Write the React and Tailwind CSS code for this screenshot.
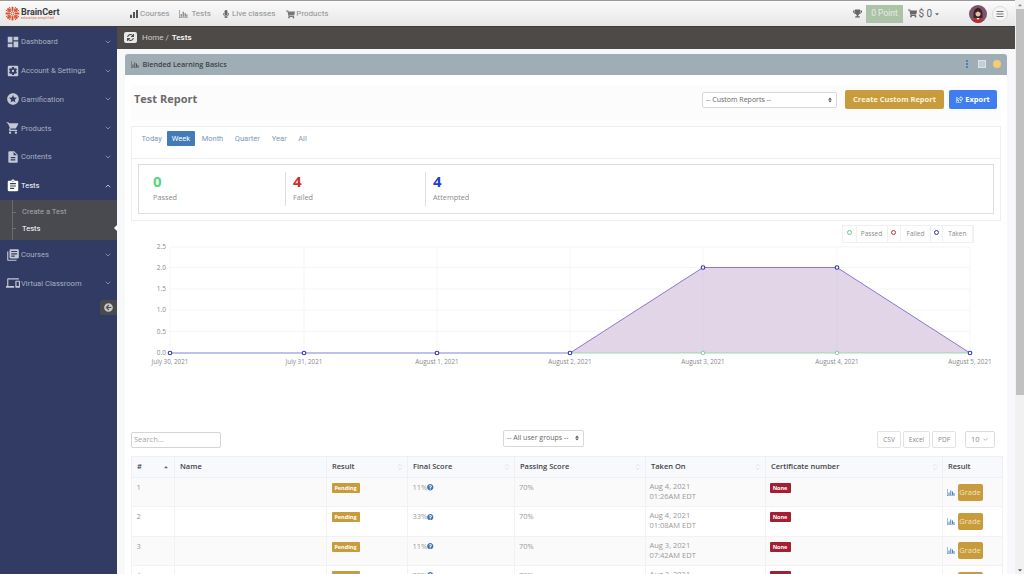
import { ChevronDown, ChevronUp, ChevronsUpDown } from "lucide-react"
import {
  FaMicrophone,
  FaShoppingCart,
  FaTrophy,
  FaSync,
  FaRegShareSquare,
  FaQuestionCircle,
  FaArrowCircleLeft,
  FaBars,
  FaCaretDown,
  FaCaretUp,
  FaSort,
} from "react-icons/fa"
import {
  MdDashboard,
  MdSettingsApplications,
  MdStars,
  MdShoppingCart,
  MdDescription,
  MdAssignment,
  MdLibraryBooks,
  MdDevices,
} from "react-icons/md"

const BarChartIcon = ({ className }) => (
  <svg viewBox="0 0 16 14" className={className} fill="currentColor">
    <path d="M0 0h1v13h15v1H0z" />
    <path d="M3 7h2v5H3zM6.500 3h2v9h-2zM10 5h2v7h-2zM13 8h2v4h-2z" />
  </svg>
)

const SignalIcon = ({ className }) => (
  <svg viewBox="0 0 12 12" className={className} fill="currentColor">
    <path d="M0 7h3v5H0zM4.500 3h3v9h-3zM9 0h3v12H9z" />
  </svg>
)

const Logo = () => (
  <svg viewBox="0 0 24 24" className="w-[15px] h-[15px] text-[#d9522f]" fill="none" stroke="currentColor">
    <path d="M12 1v7M12 16v7M1 12h7M16 12h7M4 4l5 5M15 15l5 5M20 4l-5 5M9 15l-5 5" strokeWidth="3" />
    <path d="M7 1.500l2 5M17 1.500l-2 5M7 22.500l2-5M17 22.500l-2-5M1.500 7l5 2M1.500 17l5-2M22.500 7l-5 2M22.500 17l-5-2" strokeWidth="1.600" />
    <circle cx="12" cy="12" r="2.500" strokeWidth="1.600" />
  </svg>
)

const Avatar = () => (
  <svg viewBox="0 0 36 36" className="w-[18px] h-[18px] rounded-full">
    <rect width="36" height="36" fill="#7a5468" />
    <path d="M9 20c0-10 4-14 9-14s9 4 9 14v6H9z" fill="#3d2029" />
    <ellipse cx="18" cy="17" rx="5" ry="6" fill="#e9bfa6" />
    <path d="M12 15c1-5 4-6 6-6s5 1 6 6c-3 0-5-1-6-3-1 2-3 3-6 3z" fill="#3d2029" />
    <path d="M8 36c0-7 4-10 10-10s10 3 10 10z" fill="#c2272d" />
    <path d="M15 26l3 4 3-4z" fill="#fff" />
  </svg>
)

const sidebarItems = [
  { label: "Dashboard", Icon: MdDashboard },
  { label: "Account & Settings", Icon: MdSettingsApplications },
  { label: "Gamification", Icon: MdStars },
  { label: "Products", Icon: MdShoppingCart },
  { label: "Contents", Icon: MdDescription },
  { label: "Tests", Icon: MdAssignment, open: true },
  { label: "Courses", Icon: MdLibraryBooks },
  { label: "Virtual Classroom", Icon: MdDevices },
]

const rows = [
  { id: 1, score: "11%", date: "Aug 4, 2021", time: "01:26AM EDT" },
  { id: 2, score: "33%", date: "Aug 4, 2021", time: "01:08AM EDT" },
  { id: 3, score: "11%", date: "Aug 3, 2021", time: "07:42AM EDT" },
  { id: 4, score: "33%", date: "Aug 3, 2021", time: "07:30AM EDT" },
]

const columns = [
  { label: "#", width: "w-[43px]" },
  { label: "Name", width: "w-[152px]" },
  { label: "Result", width: "w-[81px]", sort: true },
  { label: "Final Score", width: "w-[107px]", sort: true },
  { label: "Passing Score", width: "w-[131px]", sort: true },
  { label: "Taken On", width: "w-[120px]", sort: true },
  { label: "Certificate number", width: "w-[177px]", sort: true },
  { label: "Result", width: "w-[60px]" },
]

const Sidebar = () => (
  <aside className="w-[117px] shrink-0 bg-[#313b64] pt-[0.5px] font-['Roboto',sans-serif] text-[7.600px]">
    {sidebarItems.map(({ label, Icon, open }) => (
      <div key={label}>
        <div className={`h-[28.800px] flex items-center pl-[6px] pr-[5px] ${open ? "text-white" : "text-[#a9afc0]"}`}>
          <span className="w-[15px] flex justify-start">
            <Icon className={`text-[14px] ${open ? "text-white" : "text-[#c4c8d2]"}`} />
          </span>
          <span className="flex-1 whitespace-nowrap">{label}</span>
          {open ? <ChevronUp size={8} /> : <ChevronDown size={8} />}
        </div>
        {open && (
          <div className="h-[40px] bg-[#494a50] relative pl-[22px] pt-[4px] leading-[16.500px] text-[#a5a6aa]">
            <div className="absolute left-[12px] top-0 bottom-0 w-px bg-[#6b6c72]" />
            <div className="absolute left-[12px] top-[12px] w-[4px] h-px bg-[#6b6c72]" />
            <div className="absolute left-[12px] top-[28px] w-[4px] h-px bg-[#6b6c72]" />
            <div>Create a Test</div>
            <div className="text-white">Tests</div>
            <div className="absolute right-0 top-[25px] w-0 h-0 border-y-[3px] border-y-transparent border-r-[3px] border-r-white" />
          </div>
        )}
      </div>
    ))}
    <div className="flex justify-end mt-[2.500px]">
      <div className="w-[17px] h-[15px] rounded-l-[3px] bg-[#4a4a4c] flex items-center justify-center">
        <FaArrowCircleLeft className="text-[9px] text-[#c8c8c8]" />
      </div>
    </div>
  </aside>
)

const Header = () => (
  <header className="h-[27px] shrink-0 border-t border-t-[#9a9a9a] border-b border-b-[#3f3d3b] bg-gradient-to-b from-[#fbfbfb] to-[#e6e6e6] flex items-center font-['Roboto',sans-serif] text-[8px] text-[#8a8f94]">
    <div className="w-[130px] pl-[5px] flex items-center">
      <Logo />
      <div className="ml-[1px]">
        <div className="font-bold text-[9px] leading-[10px] text-[#3b3b3b]">BrainCert</div>
        <div className="text-[3px] leading-[3px] text-[#d9522f] tracking-[0.3px]">education simplified</div>
      </div>
    </div>
    <nav className="flex items-center mt-[1px]">
      <span className="flex items-center gap-[2px]"><SignalIcon className="w-[8px] h-[8px] text-[#555]" />Courses</span>
      <span className="ml-[10px] flex items-center gap-[3px]"><BarChartIcon className="w-[9px] h-[8px] text-[#777]" />Tests</span>
      <span className="ml-[11px] flex items-center gap-[2px]"><FaMicrophone className="text-[8px] text-[#666]" />Live classes</span>
      <span className="ml-[11px] flex items-center gap-[1px]"><FaShoppingCart className="text-[9px] text-[#777]" />Products</span>
    </nav>
    <div className="ml-auto flex items-center pr-[7px]">
      <FaTrophy className="text-[9px] text-[#666]" />
      <div className="ml-[4px] w-[37px] h-[18px] bg-[#adc3a8] text-[#e4ece2] text-[8.500px] flex items-center justify-center">0 Point</div>
      <div className="ml-[5px] w-[61px] flex items-center gap-[1.500px] text-[#666] text-[10px]">
        <FaShoppingCart className="text-[9px]" />$ 0
        <FaCaretDown className="text-[6px]" />
      </div>
      <Avatar />
      <div className="ml-[5px] w-[16px] h-[16px] rounded-full bg-[#f5f5f5] border border-[#ddd] flex items-center justify-center">
        <FaBars className="text-[8px] text-[#777]" />
      </div>
    </div>
  </header>
)

const StatBlock = ({ value, label, color, width, border }) => (
  <div className={`${width} h-[34px] pl-[7px] ${border ? "border-r border-r-[#dedede]" : ""}`}>
    <div className={`${color} font-bold text-[15px] leading-[19px] mt-[0.5px]`}>{value}</div>
    <div className="text-[7.300px] text-[#8b8b8b] leading-[12px]">{label}</div>
  </div>
)

const Chart = () => {
  const xs = [170, 304, 437, 570, 703, 837, 970]
  const dates = ["July 30, 2021", "July 31, 2021", "August 1, 2021", "August 2, 2021", "August 3, 2021", "August 4, 2021", "August 5, 2021"]
  const ys = [
    { y: 248, t: "2.5" },
    { y: 268.500, t: "2.0" },
    { y: 290, t: "1.5" },
    { y: 311, t: "1.0" },
    { y: 332.500, t: "0.5" },
    { y: 354, t: "0.0" },
  ]
  return (
    <svg viewBox="131 244 870 124" className="w-[870px] h-[124px] block font-['Open_Sans',sans-serif]">
      {ys.map((r) => (
        <g key={r.t}>
          <line x1="170" x2="970" y1={r.y} y2={r.y} stroke="#f2f2f2" strokeWidth="0.8" />
          <text x="166" y={r.y + 2} textAnchor="end" fontSize="6.500" fill="#888">{r.t}</text>
        </g>
      ))}
      {xs.map((x, i) => (
        <g key={x}>
          <line x1={x} x2={x} y1="248" y2="354" stroke="#f2f2f2" strokeWidth="0.8" />
          <text x={x} y="365" textAnchor="middle" fontSize="6.300" fill="#888">{dates[i]}</text>
        </g>
      ))}
      <polygon points="570,354 703,268.500 837,268.500 970,354" fill="#e2d5e8" />
      <line x1="703" x2="703" y1="268.500" y2="354" stroke="#dcd0e2" strokeWidth="0.8" />
      <line x1="837" x2="837" y1="268.500" y2="354" stroke="#dcd0e2" strokeWidth="0.8" />
      <line x1="170" x2="570" y1="354" y2="354" stroke="#8585e0" strokeWidth="1" />
      <line x1="570" x2="970" y1="354" y2="354" stroke="#88dca0" strokeWidth="0.8" />
      <polyline points="570,354 703,268.500 837,268.500 970,354" fill="none" stroke="#7a6ccc" strokeWidth="0.9" />
      {[703, 837].map((x) => (
        <circle key={x} cx={x} cy="354" r="1.800" fill="#fff" stroke="#66cc88" strokeWidth="0.8" />
      ))}
      {xs.slice(0, 4).map((x) => (
        <circle key={x} cx={x} cy="354" r="1.800" fill="#fff" stroke="#3434b0" strokeWidth="1.100" />
      ))}
      {[[703, 268.500], [837, 268.500], [970, 354]].map(([x, y]) => (
        <circle key={x} cx={x} cy={y} r="1.800" fill="#fff" stroke="#3434b0" strokeWidth="1.100" />
      ))}
    </svg>
  )
}

const Legend = () => (
  <div className="flex justify-end pr-[27px] h-[18px]">
    <div className="flex border border-[#f0f0f0] text-[6.500px] text-[#8a8a8a] h-[17.500px]">
      {[
        { label: "Passed", color: "border-[#66cc88]", box: "w-[13.500px]", w: "w-[31px]" },
        { label: "Failed", color: "border-[#b83a3a]", box: "w-[13.500px]", w: "w-[30px]" },
        { label: "Taken", color: "border-[#3434b0]", box: "w-[11.500px]", w: "w-[30.500px]" },
      ].map((l) => (
        <div key={l.label} className="flex">
          <div className={`${l.box} flex justify-center pt-[3.500px] border-r border-r-[#f0f0f0]`}>
            <span className={`w-[5px] h-[5px] rounded-full border ${l.color}`} />
          </div>
          <div className={`${l.w} flex items-center justify-center border-r border-r-[#f0f0f0]`}>{l.label}</div>
        </div>
      ))}
    </div>
  </div>
)

const ExportBtn = ({ children, w }) => (
  <div className={`${w} h-[17px] border border-[#e2e2e2] rounded-[2px] flex items-center justify-center text-[6.500px] text-[#8a8a8a]`}>
    {children}
  </div>
)

const ReportTable = () => (
  <table className="w-[871px] -ml-[0.5px] table-fixed border-collapse text-[7.500px] text-[#999]">
    <colgroup>
      {columns.map((c, i) => (
        <col key={i} className={c.width} />
      ))}
    </colgroup>
    <thead>
      <tr className="h-[21px] bg-[#f8f9fd] text-[#444]">
        {columns.map((c, i) => (
          <th key={i} className="border border-[#eff0f4] pl-[5.500px] pr-[3px] text-left font-semibold">
            <div className="flex items-center justify-between">
              {c.label}
              {c.sort && <ChevronsUpDown size={8} className="text-[#d5d8e0]" />}
              {i === 0 && <FaCaretUp className="text-[6px] mr-[2px] text-[#666]" />}
            </div>
          </th>
        ))}
      </tr>
    </thead>
    <tbody>
      {rows.map((r) => (
        <tr key={r.id} className={`h-[29.300px] ${r.id % 2 ? "bg-[#fbfafa]" : "bg-white"}`}>
          <td className="border border-[#f2f2f2] px-[5px] pt-[4px] align-top">{r.id}</td>
          <td className="border border-[#f2f2f2]" />
          <td className="border border-[#f2f2f2] px-[5px] pt-[5px] align-top">
            <span className="block w-[28px] text-center bg-[#c89b3c] text-white font-bold text-[5.500px] leading-[10px] rounded-[1px]">Pending</span>
          </td>
          <td className="border border-[#f2f2f2] px-[5px] pt-[4px] align-top">
            <span className="flex items-center">{r.score}<FaQuestionCircle className="text-[6.500px] text-[#3f74b5]" /></span>
          </td>
          <td className="border border-[#f2f2f2] px-[4.500px] pt-[4px] align-top">70%</td>
          <td className="border border-[#f2f2f2] px-[4px] pt-[3px] align-top leading-[10px]">
            <div>{r.date}</div>
            <div>{r.time}</div>
          </td>
          <td className="border border-[#f2f2f2] px-[4px] pt-[5px] align-top">
            <span className="block w-[21px] text-center bg-[#a31f34] text-white font-bold text-[5.500px] leading-[10px] rounded-[1px]">None</span>
          </td>
          <td className="border border-[#f2f2f2] pl-[4px] align-middle">
            <div className="flex items-center gap-[3px]">
              <BarChartIcon className="w-[8px] h-[7px] text-[#4a7fc0]" />
              <span className="w-[25px] h-[17px] bg-[#c89b3c] text-[#f0e2c0] rounded-[2px] flex items-center justify-center">Grade</span>
            </div>
          </td>
        </tr>
      ))}
    </tbody>
  </table>
)

const App = () => {
  return (
    <div className="w-[1024px] h-[574px] overflow-hidden flex bg-white font-['Open_Sans',sans-serif]">
      <div className="w-[1015px] flex flex-col">
        <Header />
        <div className="flex flex-1 min-h-0">
          <Sidebar />
          <main className="flex-1 min-w-0 flex flex-col">
            {/* Breadcrumb */}
            <div className="h-[21.500px] shrink-0 bg-[#4d4a48] flex items-center pl-[7px] font-['Roboto',sans-serif] text-[8px] text-[#cfcfcf]">
              <span className="w-[13px] h-[11px] rounded-[2px] bg-[#e8e8e8] flex items-center justify-center">
                <FaSync className="text-[7px] text-[#4d4a48]" />
              </span>
              <span className="ml-[5px]">Home /</span>
              <span className="ml-[3px] text-white font-medium">Tests</span>
            </div>

            <div className="flex-1 min-h-0 bg-[#f7f8fa] px-[8px] pt-[5px]">
              <div className="bg-white h-full overflow-hidden rounded-t-[3px]">
                <div className="h-[21px] bg-[#9fadb5] flex items-center px-[6px] text-[7.200px] font-semibold text-[#3d4347]">
                  <BarChartIcon className="w-[8px] h-[7px] text-[#4a5458] mr-[3.500px]" />
                  Blended Learning Basics
                  <span className="ml-auto flex items-center">
                    <span className="flex flex-col gap-[1px] mr-[10px]">
                      <i className="w-[2px] h-[2px] bg-[#4a7fc0]" />
                      <i className="w-[2px] h-[2px] bg-[#4a7fc0]" />
                      <i className="w-[2px] h-[2px] bg-[#4a7fc0]" />
                    </span>
                    <span className="w-[8px] h-[8px] bg-[#c4ccd6] border border-[#dde2e8] mr-[7px]" />
                    <span className="w-[8px] h-[8px] rounded-full bg-[#f2cf73]" />
                  </span>
                </div>

                <div className="px-[6px] pt-[10px]">
                  <div className="h-[36.500px] pb-[6px] bg-[#fcfcfc] flex items-center pl-[3px] pr-[4px]">
                    <h1 className="text-[11px] font-bold text-[#6b6b6b] mb-[2px]">Test Report</h1>
                    <div className="ml-auto w-[135px] h-[16px] bg-white border border-[#d8d8d8] rounded-[2px] flex items-center justify-between px-[3px] text-[7px] text-[#666]">
                      -- Custom Reports --
                      <FaSort className="text-[6px] text-[#555]" />
                    </div>
                    <div className="ml-[8px] w-[99px] h-[19px] bg-[#c89b3c] text-[#fbf3df] rounded-[2px] font-bold text-[7.500px] flex items-center justify-center">
                      Create Custom Report
                    </div>
                    <div className="ml-[5px] w-[48px] h-[19px] bg-[#3f7df0] text-white rounded-[2px] font-bold text-[7.500px] flex items-center justify-center gap-[2px]">
                      <FaRegShareSquare className="text-[7px]" />
                      Export
                    </div>
                  </div>

                  {/* Period tabs and totals */}
                  <div className="mt-[5px] h-[95px] border border-[#eeeeee]">
                    <div className="h-[32px] pb-[8px] border-b border-b-[#eeeeee] flex items-center pl-[3.500px] text-[7.500px] text-[#7f97b5] font-['Roboto',sans-serif]">
                      <span className="pl-[6px] pr-[5px]">Today</span>
                      <span className="h-[15px] w-[28.500px] bg-[#437bb6] text-white rounded-[1px] flex items-center justify-center">Week</span>
                      <span className="ml-[6.500px]">Month</span>
                      <span className="ml-[11.500px]">Quarter</span>
                      <span className="ml-[12px]">Year</span>
                      <span className="ml-[11.500px]">All</span>
                    </div>
                    <div className="mx-[6px] mt-[4.500px] h-[50px] border border-[#dddddd] flex items-center pl-[7px]">
                      <StatBlock value="0" label="Passed" color="text-[#55d67f]" width="w-[140px]" border />
                      <StatBlock value="4" label="Failed" color="text-[#d22b2b]" width="w-[140px]" border />
                      <StatBlock value="4" label="Attempted" color="text-[#1f3fd0]" width="w-[140px]" />
                    </div>
                  </div>

                  <div className="mt-[4px]">
                    <Legend />
                    <Chart />
                  </div>

                  {/* Table toolbar */}
                  <div className="mt-[64px] h-[17px] flex items-center">
                    <div className="w-[90px] h-[16px] border border-[#d5d5d5] rounded-[2px] pl-[2px] flex items-center text-[7.500px] text-[#a5a5a5]">Search...</div>
                    <div className="ml-[282px] -mt-[3px] w-[81px] h-[17px] border border-[#d8d8d8] rounded-[2px] flex items-center justify-between px-[3px] text-[7px] text-[#666]">
                      -- All user groups --
                      <FaSort className="text-[6px] text-[#555]" />
                    </div>
                    <div className="ml-auto flex items-center gap-[2px] pr-[6px]">
                      <ExportBtn w="w-[24px]">CSV</ExportBtn>
                      <ExportBtn w="w-[27px]">Excel</ExportBtn>
                      <ExportBtn w="w-[24px]">PDF</ExportBtn>
                      <div className="ml-[7px] w-[30px] h-[17px] border border-[#dcdcdc] rounded-[2px] flex items-center justify-between px-[5px] text-[7.500px] text-[#8a8a8a]">
                        10
                        <ChevronDown size={7} />
                      </div>
                    </div>
                  </div>

                  <div className="mt-[8px]">
                    <ReportTable />
                  </div>
                </div>
              </div>
            </div>
          </main>
        </div>
      </div>

      {/* Page scrollbar */}
      <div className="w-[9px] bg-[#f1f1f1] flex flex-col items-center pt-[2px]">
        <FaCaretUp className="text-[6px] text-[#888]" />
        <div className="w-[8px] h-[386px] mt-[1px] bg-[#c1c1c1]" />
        <FaCaretDown className="text-[6px] text-[#555] mt-auto mb-[1px]" />
      </div>
    </div>
  )
}

export default App
